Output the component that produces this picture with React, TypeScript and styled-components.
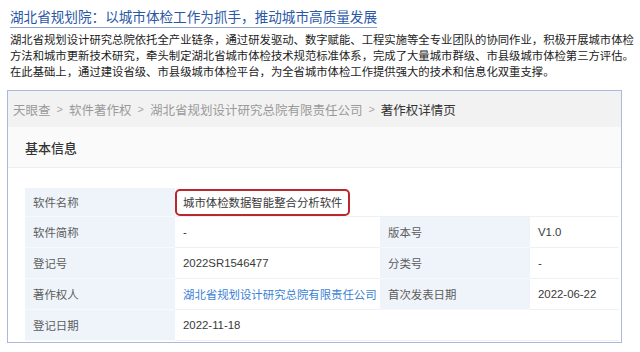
import { Fragment } from "react";
import styled, { createGlobalStyle } from "styled-components";

const GlobalStyle = createGlobalStyle`
  body {
    margin: 0;
    background: #ffffff;
    font-family: "Liberation Sans", "Noto Sans CJK SC", sans-serif;
  }
`;

const Page = styled.div`
  width: 640px;
  height: 352px;
  overflow: hidden;
  padding: 0 18px 0 7px;
  box-sizing: border-box;
`;

const Title = styled.div`
  display: inline-block;
  margin-left: 3px;
  padding-top: 9px;
  font-size: 13.6px;
  line-height: 18px;
  color: #2a58a6;
  border-bottom: 1px solid #8aa2cc;
  white-space: nowrap;
`;

const Intro = styled.p`
  margin: 4px 0 0 3px;
  font-size: 11.35px;
  line-height: 16px;
  color: #1c1c1c;
  white-space: nowrap;
`;

const Panel = styled.div`
  margin-top: 10px;
  width: 615px;
  height: 253px;
  box-sizing: border-box;
  border: 1px solid #a9b8dc;
  display: flex;
  flex-direction: column;
`;

const Crumbs = styled.div`
  height: 36px;
  background: #f2f2f2;
  display: flex;
  align-items: center;
  padding-left: 5px;
  font-size: 12.5px;
  color: #9a9a9a;
  white-space: nowrap;
`;

const Sep = styled.span`
  margin: 0 6px;
  font-size: 11px;
  color: #a8a8a8;
`;

const Current = styled.span`
  color: #333333;
`;

const Card = styled.div`
  flex: 1;
  background: #ffffff;
  display: flex;
  flex-direction: column;
`;

const CardHead = styled.div`
  height: 40px;
  background: #fafafa;
  border-bottom: 1px solid #efefef;
  display: flex;
  align-items: center;
  padding-left: 17px;
  font-size: 13px;
  color: #333333;
  font-weight: 500;
`;

const Table = styled.div`
  margin: 20px 2px 0 17px;
  display: grid;
  grid-template-columns: 150px 205px 150px 1fr;
  grid-auto-rows: 31px;
  grid-template-rows: 29px;
  font-size: 11.4px;
`;

const Cell = styled.div<{ $label?: boolean; $span?: number }>`
  grid-column: span ${(p) => p.$span ?? 1};
  display: flex;
  align-items: center;
  padding-left: 8px;
  background: ${(p) => (p.$label ? "#eff4fa" : "#ffffff")};
  color: ${(p) => (p.$label ? "#5c5c5c" : "#3a3a3a")};
  border-bottom: 1px solid ${(p) => (p.$label ? "#f7f9fc" : "#eef0f3")};
  white-space: nowrap;
`;

const NameCell = styled(Cell)`
  padding-left: 0;
`;

const Highlight = styled.span`
  display: flex;
  align-items: center;
  height: 27px;
  padding: 0 6px 0 6px;
  box-sizing: border-box;
  border: 2px solid #b8282e;
  border-radius: 5px;
`;

const Link = styled.span`
  color: #3b7fd4;
`;

const rows: [string, string, string, string][] = [
  ["软件简称", "-", "版本号", "V1.0"],
  ["登记号", "2022SR1546477", "分类号", "-"],
];

export default function App() {
  return (
    <Page>
      <GlobalStyle />
      <Title>湖北省规划院：以城市体检工作为抓手，推动城市高质量发展</Title>
      <Intro>
        湖北省规划设计研究总院依托全产业链条，通过研发驱动、数字赋能、工程实施等全专业团队的协同作业，积极开展城市体检
        <br />
        方法和城市更新技术研究，牵头制定湖北省城市体检技术规范标准体系，完成了大量城市群级、市县级城市体检第三方评估。
        <br />
        在此基础上，通过建设省级、市县级城市体检平台，为全省城市体检工作提供强大的技术和信息化双重支撑。
      </Intro>
      <Panel>
        <Crumbs>
          天眼查<Sep>&gt;</Sep>软件著作权<Sep>&gt;</Sep>湖北省规划设计研究总院有限责任公司
          <Sep>&gt;</Sep>
          <Current>著作权详情页</Current>
        </Crumbs>
        <Card>
          <CardHead>基本信息</CardHead>
          <Table>
            <Cell $label>软件名称</Cell>
            <NameCell $span={3}>
              <Highlight>城市体检数据智能整合分析软件</Highlight>
            </NameCell>
            {rows.map((r) => (
              <Fragment key={r[0]}>
                <Cell $label>{r[0]}</Cell>
                <Cell>{r[1]}</Cell>
                <Cell $label>{r[2]}</Cell>
                <Cell>{r[3]}</Cell>
              </Fragment>
            ))}
            <Cell $label>著作权人</Cell>
            <Cell>
              <Link>湖北省规划设计研究总院有限责任公司</Link>
            </Cell>
            <Cell $label>首次发表日期</Cell>
            <Cell>2022-06-22</Cell>
            <Cell $label>登记日期</Cell>
            <Cell $span={3}>2022-11-18</Cell>
          </Table>
        </Card>
      </Panel>
    </Page>
  );
}
